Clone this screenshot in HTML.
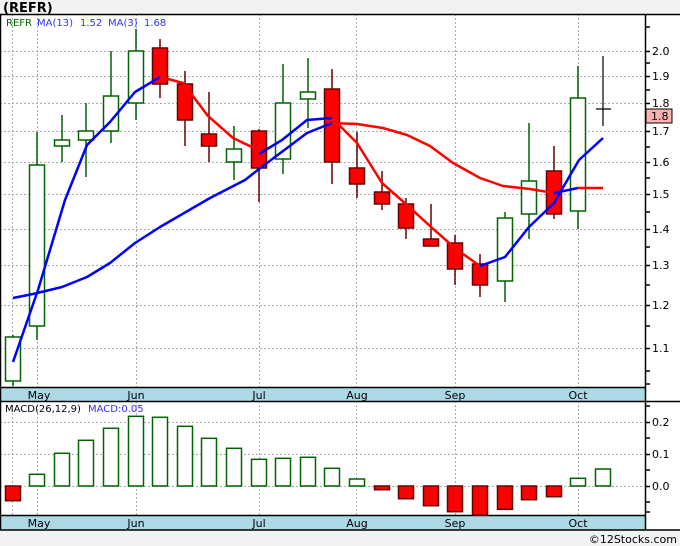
<!DOCTYPE html>
<html><head><meta charset="utf-8"><style>
html,body{margin:0;padding:0;background:#f2f2f2;}
svg{display:block;font-family:"DejaVu Sans","Liberation Sans",sans-serif;}
</style></head><body>
<svg width="680" height="546" viewBox="0 0 680 546" xmlns="http://www.w3.org/2000/svg">
<rect x="0" y="0" width="680" height="546" fill="#f2f2f2"/>
<text x="3" y="12" font-size="13" font-weight="bold" fill="#000">(REFR)</text>
<rect x="0" y="14" width="680" height="516" fill="#fff"/>
<!-- grid -->
<g stroke="#aaa" stroke-width="1" stroke-dasharray="2,2" fill="none">
<path d="M0 51.5H645M0 76.5H645M0 103.5H645M0 131.5H645M0 162.5H645M0 194.5H645M0 229.5H645M0 265.5H645M0 305.5H645M0 348.5H645"/>
<path d="M12.5 14V387M37.5 14V387M136.5 14V387M259.5 14V387M356.5 14V387M455.5 14V387M578.5 14V387"/>
<path d="M0 422.5H645M0 454.5H645M0 486.5H645"/>
<path d="M12.5 401V515M37.5 401V515M136.5 401V515M259.5 401V515M356.5 401V515M455.5 401V515M578.5 401V515"/>
</g>
<!-- date bands -->
<rect x="0" y="387" width="645" height="14" fill="#add8e6"/>
<rect x="0" y="515" width="645" height="15" fill="#add8e6"/>
<g font-size="11" fill="#000" text-anchor="middle">
<text x="39" y="399">May</text><text x="136" y="399">Jun</text><text x="259" y="399">Jul</text><text x="357" y="399">Aug</text><text x="455" y="399">Sep</text><text x="578" y="399">Oct</text>
<text x="39" y="527">May</text><text x="136" y="527">Jun</text><text x="259" y="527">Jul</text><text x="357" y="527">Aug</text><text x="455" y="527">Sep</text><text x="578" y="527">Oct</text>
</g>
<!-- frame -->
<g stroke="#000" stroke-width="1.5" fill="none">
<path d="M0 14.5H680M0 387.5H645M0 401.5H680M0 515.5H645M0 530H680M645.5 14V530M0.5 14V530"/>
<path d="M645 27h5M645 51.5h5M645 63h5M645 76.5h5M645 90h5M645 103.5h5M645 117h5M645 131.5h5M645 147h5M645 162.5h5M645 178h5M645 194.5h5M645 212h5M645 229.5h5M645 247h5M645 265.5h5M645 285h5M645 305.5h5M645 326h5M645 348.5h5M645 371h5M645 384h5"/>
<path d="M645 406h5M645 422.5h5M645 438h5M645 454.5h5M645 470h5M645 486.5h5M645 502h5M645 512h5"/>
</g>
<g font-size="11" fill="#000">
<text x="652" y="55">2.0</text><text x="652" y="80">1.9</text><text x="652" y="107">1.8</text><text x="652" y="135">1.7</text><text x="652" y="166">1.6</text><text x="652" y="198">1.5</text><text x="652" y="233">1.4</text><text x="652" y="269">1.3</text><text x="652" y="309">1.2</text><text x="652" y="352">1.1</text>
<text x="652" y="426">0.2</text><text x="652" y="458">0.1</text><text x="652" y="490">0.0</text>
</g>
<rect x="646" y="109" width="26" height="14" fill="#ffb0b0" stroke="#000" stroke-width="1"/>
<text x="651" y="120" font-size="11" fill="#000">1.8</text>
<!-- legends -->
<g font-size="10">
<text x="6" y="26" fill="#006400">REFR</text>
<text x="37" y="26" fill="#3030ff">MA(13)</text><text x="80" y="26" fill="#3030ff">1.52</text>
<text x="108" y="26" fill="#3030ff">MA(3)</text><text x="144" y="26" fill="#3030ff">1.68</text>
<text x="5" y="412" fill="#000">MACD(26,12,9)</text><text x="88" y="412" fill="#3030ff">MACD:0.05</text>
</g>
<!-- candles -->
<g stroke-width="1.5">
<g stroke="#006400" fill="#fff">
<path d="M13 335V386M37 132V340M62 115V162M86 103V177M111 51V143M136 29V120M234 126V180M283 64V174M308 58V128M505 212V302M529 123V239M578 66V229"/>
<rect x="5.5" y="337" width="15" height="44"/><rect x="29.5" y="165" width="15" height="161"/><rect x="54.5" y="140" width="15" height="6"/><rect x="78.5" y="131" width="15" height="9"/><rect x="103.5" y="96" width="15" height="35"/><rect x="128.5" y="51" width="15" height="52"/><rect x="226.5" y="149" width="15" height="13"/><rect x="275.5" y="103" width="15" height="56"/><rect x="300.5" y="92" width="15" height="7"/><rect x="497.5" y="218" width="15" height="63"/><rect x="521.5" y="181" width="15" height="33"/><rect x="570.5" y="98" width="15" height="113"/>
</g>
<g stroke="#660000" fill="#ff0000">
<path d="M160 39V98M185 71V146M209 92V162M259 129V202M332 69V184M357 132V198M382 171V210M406 198V239M431 204V246M455 235V285M480 254V297M554 146V219"/>
<rect x="152.5" y="48" width="15" height="36"/><rect x="177.5" y="84" width="15" height="36"/><rect x="201.5" y="134" width="15" height="12"/><rect x="251.5" y="131" width="15" height="37"/><rect x="324.5" y="89" width="15" height="73"/><rect x="349.5" y="168" width="15" height="16"/><rect x="374.5" y="192" width="15" height="12"/><rect x="398.5" y="204" width="15" height="24"/><rect x="423.5" y="239" width="15" height="7"/><rect x="447.5" y="243" width="15" height="26"/><rect x="472.5" y="264" width="15" height="21"/><rect x="546.5" y="171" width="15" height="43"/>
</g>
<path d="M603 56V126M596 109H611" stroke="#000" stroke-width="1.2"/>
</g>
<!-- MAs -->
<g fill="none" stroke-width="2.5" stroke-linejoin="round">
<polyline stroke="#0000ff" points="13,298 33,294 62,287 87,277 110,263 135,243 160,227 210,198 245,180 259,169 283,151 307,133 332,123"/>
<polyline stroke="#ff0000" points="332,123 357,124 383,128 407,135 430,146 453,163 480,178 503,186 530,189 554,193"/>
<polyline stroke="#0000ff" points="554,193 578,188"/>
<polyline stroke="#ff0000" points="578,188 603,188"/>
<polyline stroke="#0000ff" points="13,362 38,290 65,200 87,145 110,122 135,92 160,77"/>
<polyline stroke="#ff0000" points="160,77 168,79 183,83 208,116 233,138 258,150"/>
<polyline stroke="#0000ff" points="259,154 282,140 307,120 332,118"/>
<polyline stroke="#ff0000" points="332,118 357,143 382,183 407,205 431,227 456,249 480,266"/>
<polyline stroke="#0000ff" points="480,266 505,257 529,227 554,203 579,160 603,138"/>
</g>
<!-- MACD bars -->
<g stroke-width="1.5">
<g stroke="#006400" fill="#fff">
<rect x="29.5" y="474.3" width="15" height="11.7"/><rect x="54.5" y="453.3" width="15" height="32.7"/><rect x="78.5" y="440.3" width="15" height="45.7"/><rect x="103.5" y="428.3" width="15" height="57.7"/><rect x="128.5" y="416.3" width="15" height="69.7"/><rect x="152.5" y="417.3" width="15" height="68.7"/><rect x="177.5" y="426.3" width="15" height="59.7"/><rect x="201.5" y="438.3" width="15" height="47.7"/><rect x="226.5" y="448.3" width="15" height="37.7"/><rect x="251.5" y="459.3" width="15" height="26.7"/><rect x="275.5" y="458.3" width="15" height="27.7"/><rect x="300.5" y="457.3" width="15" height="28.7"/><rect x="324.5" y="468.3" width="15" height="17.7"/><rect x="349.5" y="479" width="15" height="7"/><rect x="570.5" y="478.3" width="15" height="7.7"/><rect x="595.5" y="469" width="15" height="17"/>
</g>
<g stroke="#660000" fill="#ff0000">
<rect x="5.5" y="486" width="15" height="14.7"/><rect x="374.5" y="486" width="15" height="3.7"/><rect x="398.5" y="486" width="15" height="12.7"/><rect x="423.5" y="486" width="15" height="19.7"/><rect x="447.5" y="486" width="15" height="25.7"/><rect x="472.5" y="486" width="15" height="29"/><rect x="497.5" y="486" width="15" height="23.3"/><rect x="521.5" y="486" width="15" height="13.7"/><rect x="546.5" y="486" width="15" height="10.7"/>
</g>
</g>
<text x="677" y="543" font-size="11" fill="#000" text-anchor="end">©12Stocks.com</text>
</svg>
</body></html>
